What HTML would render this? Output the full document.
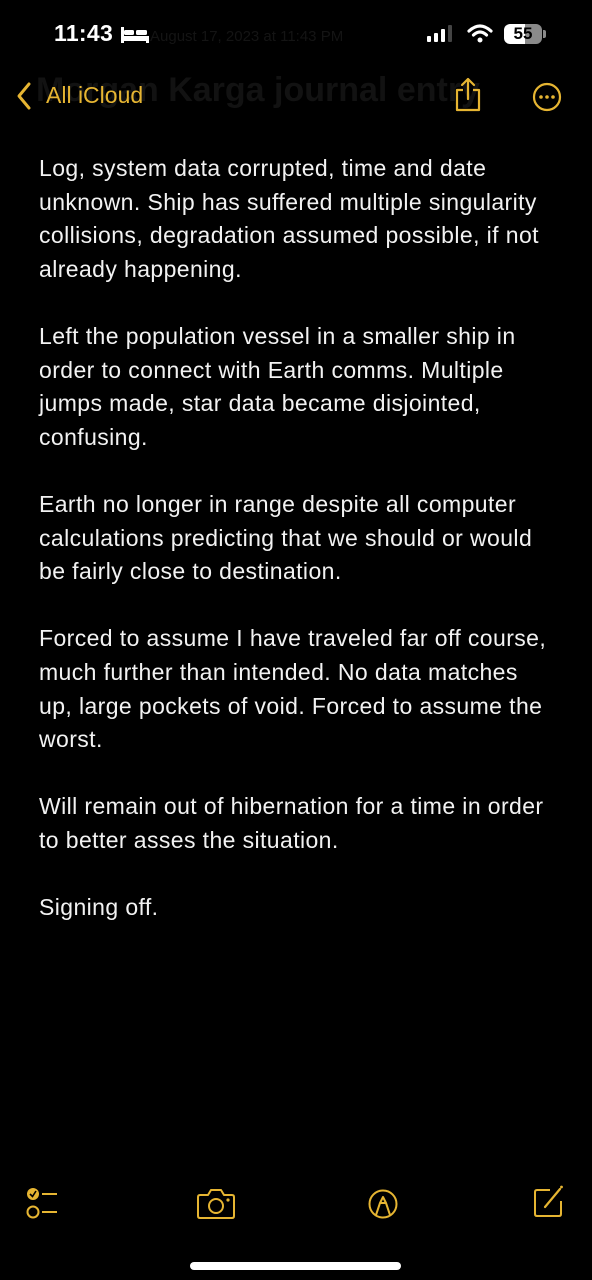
<!DOCTYPE html>
<html><head><meta charset="utf-8"><style>
body{margin:0;width:592px;height:1280px;background:#000;overflow:hidden;font-family:"Liberation Sans",sans-serif;position:relative;color:#fff}
.a{position:absolute}
.t{left:39px;top:152px;font-size:23px;letter-spacing:0.4px;line-height:33.6px;color:#f2f2f2;white-space:nowrap}
.g{color:#e6b532}
</style></head><body>
<div class="a" style="left:54px;top:20px;font-size:23px;font-weight:bold;letter-spacing:0.3px">11:43</div>
<div class="a" style="left:150px;top:28px;font-size:15px;color:#141414">August 17, 2023 at 11:43 PM</div>
<svg class="a" style="left:120px;top:25px" width="30" height="20" viewBox="0 0 30 20"><rect x="1" y="2" width="3" height="16" fill="#fff"/><rect x="1" y="11" width="28" height="5" fill="#fff"/><rect x="4" y="5" width="10" height="5" rx="1.5" fill="#fff"/><rect x="16" y="5" width="11" height="5" rx="1.5" fill="#fff"/><rect x="26" y="11" width="3" height="7" fill="#fff"/></svg>
<svg class="a" style="left:425px;top:24px" width="32" height="20"><rect x="2" y="12" width="4" height="6" rx="1" fill="#fff"/><rect x="9" y="9" width="4" height="9" rx="1" fill="#fff"/><rect x="16" y="5" width="4" height="13" rx="1" fill="#fff"/><rect x="23" y="1" width="4" height="17" rx="1" fill="#444"/></svg>
<svg class="a" style="left:467px;top:24px" width="26" height="20" viewBox="0 0 26 20"><path d="M2 7 Q13 -3 24 7" stroke="#fff" stroke-width="3.2" fill="none" stroke-linecap="round"/><path d="M6.5 11 Q13 5 19.5 11" stroke="#fff" stroke-width="3.2" fill="none" stroke-linecap="round"/><circle cx="13" cy="16" r="2.5" fill="#fff"/></svg>
<div class="a" style="left:504px;top:24px;width:38px;height:20px;border-radius:6px;background:linear-gradient(90deg,#fff 55%,#8a8a8a 55%)"></div>
<div class="a" style="left:504px;top:24px;width:38px;height:20px;font-size:17px;font-weight:bold;color:#000;text-align:center;line-height:20px">55</div>
<div class="a" style="left:543px;top:30px;width:3px;height:8px;background:#8a8a8a;border-radius:0 2px 2px 0"></div>
<div class="a" style="left:36px;top:71px;font-size:34px;font-weight:bold;color:#121212;white-space:nowrap">Morgan Karga journal entry</div>
<svg class="a" style="left:15px;top:80px" width="20" height="32"><path d="M14 4 L4 16 L14 28" stroke="#e6b532" stroke-width="3" fill="none" stroke-linecap="round" stroke-linejoin="round"/></svg>
<div class="a g" style="left:46px;top:82px;font-size:23px">All iCloud</div>
<svg class="a" style="left:453px;top:76px" width="30" height="36" viewBox="0 0 30 36"><path d="M10 14 H4 V34 H26 V14 H20" stroke="#e6b532" stroke-width="2.2" fill="none" stroke-linejoin="round"/><path d="M15 3 V23 M9 9 L15 3 L21 9" stroke="#e6b532" stroke-width="2.2" fill="none" stroke-linecap="round" stroke-linejoin="round"/></svg>
<svg class="a" style="left:530px;top:80px" width="34" height="34"><circle cx="17" cy="17" r="13" stroke="#e6b532" stroke-width="2.2" fill="none"/><circle cx="11" cy="17" r="1.8" fill="#e6b532"/><circle cx="17" cy="17" r="1.8" fill="#e6b532"/><circle cx="23" cy="17" r="1.8" fill="#e6b532"/></svg>
<div class="a t">Log, system data corrupted, time and date<br>unknown. Ship has suffered multiple singularity<br>collisions, degradation assumed possible, if not<br>already happening.<br><br>Left the population vessel in a smaller ship in<br>order to connect with Earth comms. Multiple<br>jumps made, star data became disjointed,<br>confusing.<br><br>Earth no longer in range despite all computer<br>calculations predicting that we should or would<br>be fairly close to destination.<br><br>Forced to assume I have traveled far off course,<br>much further than intended. No data matches<br>up, large pockets of void. Forced to assume the<br>worst.<br><br>Will remain out of hibernation for a time in order<br>to better asses the situation.<br><br>Signing off.</div>
<svg class="a" style="left:26px;top:1185px" width="40" height="36"><circle cx="7" cy="9" r="6" fill="#e6b532"/><path d="M4 9 L6.5 11.5 L10 6" stroke="#000" stroke-width="1.6" fill="none"/><path d="M16 9 H31 M16 27 H31" stroke="#e6b532" stroke-width="2"/><circle cx="7" cy="27" r="5.5" stroke="#e6b532" stroke-width="2" fill="none"/></svg>
<svg class="a" style="left:196px;top:1187px" width="40" height="34"><path d="M4 8 H12 L15 3 H25 L28 8 H36 Q38 8 38 10 V29 Q38 31 36 31 H4 Q2 31 2 29 V10 Q2 8 4 8 Z" stroke="#e6b532" stroke-width="2" fill="none" stroke-linejoin="round"/><circle cx="20" cy="19" r="7" stroke="#e6b532" stroke-width="2" fill="none"/><circle cx="32" cy="13" r="1.6" fill="#e6b532"/></svg>
<svg class="a" style="left:366px;top:1187px" width="34" height="34"><circle cx="17" cy="17" r="13.5" stroke="#e6b532" stroke-width="2" fill="none"/><path d="M10 28 L14 16 L17 10 L20 16 L24 28 M14 16 H20" stroke="#e6b532" stroke-width="2" fill="none" stroke-linejoin="round"/></svg>
<svg class="a" style="left:530px;top:1184px" width="36" height="36"><path d="M20 6 H7 Q5 6 5 8 V30 Q5 32 7 32 H29 Q31 32 31 30 V17" stroke="#e6b532" stroke-width="2" fill="none"/><path d="M15 23 L30 5" stroke="#e6b532" stroke-width="2.2" stroke-linecap="round"/><circle cx="31.5" cy="3" r="1.4" fill="#e6b532"/></svg>
<div class="a" style="left:190px;top:1262px;width:211px;height:8px;border-radius:4px;background:#fff"></div>
</body></html>
